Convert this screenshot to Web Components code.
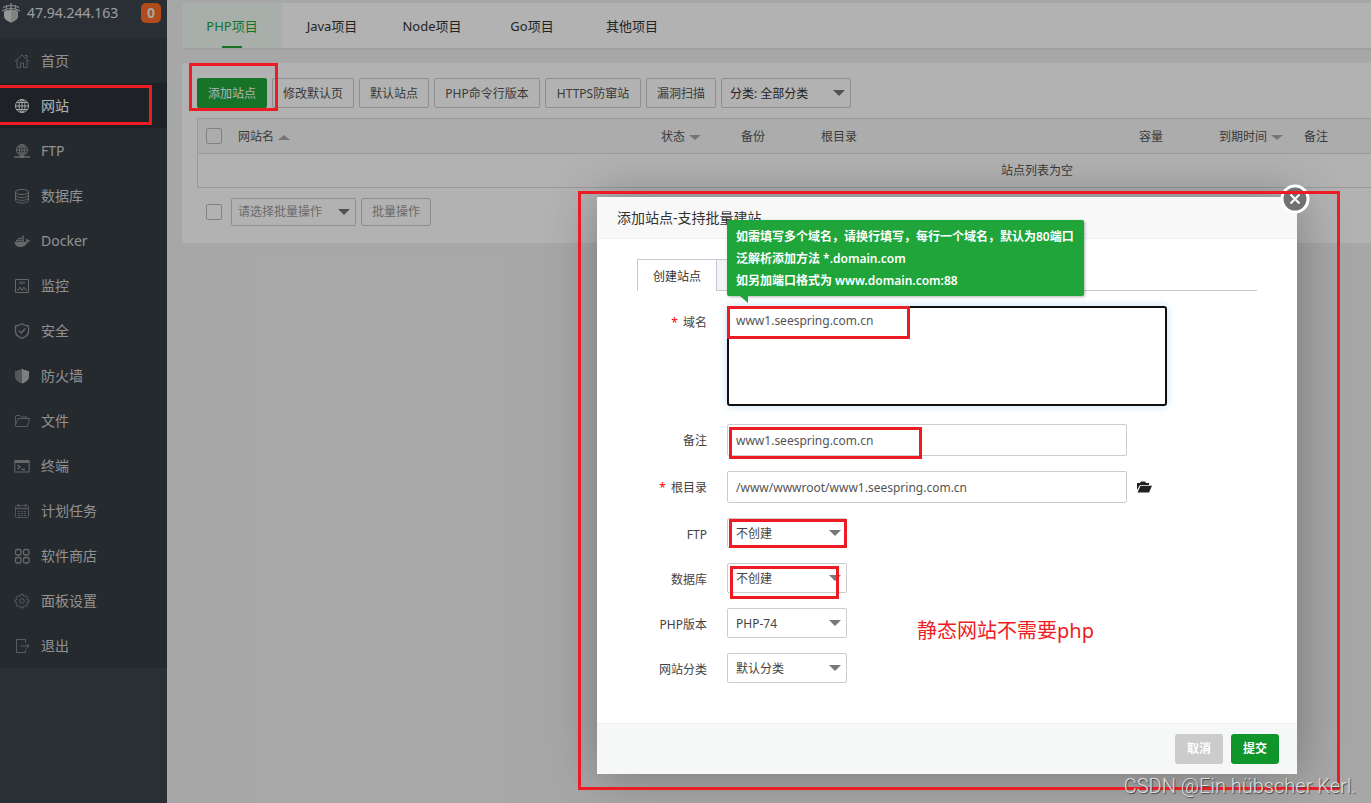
<!DOCTYPE html>
<html lang="zh-CN">
<head>
<meta charset="utf-8">
<title>网站管理</title>
<style>
  html, body { margin: 0; height: 100%; }
  body {
    font: 12px/20px "Noto Sans", "Noto Sans CJK SC", sans-serif;
    color: #555;
    background: #f0f0f0;
    overflow: hidden;
  }
</style>
</head>
<body>
<panel-app></panel-app>
<script>
const define = (name, html) => customElements.define(name, class extends HTMLElement {
  constructor() {
    super();
    this.attachShadow({ mode: 'open' }).innerHTML = html;
  }
});

const ICONS = {
  home: '<path d="M1 8.500 8 2l7 6.500M3 7v7.500h3.500V10h3v4.500H13V7M11 2.500h2V5" opacity=".8"/>',
  globe: '<circle cx="8" cy="8" r="6.500"/><ellipse cx="8" cy="8" rx="3" ry="6.500"/><path d="M8 1.500v13M1.500 8h13M2.500 4.500h11M2.500 11.500h11"/>',
  ftp: '<circle cx="8" cy="7" r="5.500"/><ellipse cx="8" cy="7" rx="2.500" ry="5.500"/><path d="M8 1.500v11M2.500 7h11M3.500 4h9M3.500 10h9"/><path d="M0 14h16" stroke-width="1.500"/><path d="M6 13h4v2H6z" fill="currentColor" stroke="none"/>',
  db: '<ellipse cx="8" cy="4" rx="6.500" ry="2.500"/><path d="M1.500 4v8.500c0 1.400 3 2.500 6.500 2.500s6.500-1.100 6.500-2.500V4M1.500 7c0 1.400 3 2.500 6.500 2.500S14.500 8.400 14.500 7M1.500 9.800c0 1.400 3 2.500 6.500 2.500s6.500-1.100 6.500-2.500"/>',
  docker: '<g fill="currentColor" stroke="none"><path d="M.5 9h11.300c.4-.9.300-1.800-.1-2.600l1-.8c.6.5.900 1.100 1 1.700.8-.1 1.500 0 2.300.4-.4 1-1.200 1.600-2.500 1.600C12.300 12.500 10 14 6.500 14 3 14 .8 12.500.5 9z"/><path d="M2 6.700h1.700v1.700H2zM4.100 6.700h1.700v1.700H4.100zM6.200 6.700h1.700v1.700H6.200zM8.300 6.700H10v1.700H8.300zM4.100 4.800h1.700v1.500H4.100zM6.200 4.800h1.700v1.500H6.200zM8.300 4.800H10v1.500H8.300zM8.300 2.800H10v1.500H8.300z"/></g>',
  monitor: '<path d="M1.500 1.500h13v13h-13z"/><path d="M3 12h1.500l1.500-3 2 3.500 2-3.500 1.500 3H13"/><path d="M5 3.500h6v2.500H5z" fill="currentColor" stroke="none" opacity=".5"/>',
  shield: '<path d="M8 .8c2 1.400 4 2 6.500 2.200v5.200c0 3.300-2.500 5.700-6.500 7.200-4-1.500-6.500-3.900-6.500-7.200V3C4 2.800 6 2.200 8 .8z" stroke-width="1.300"/><path d="m4.800 7.500 2.500 2.500 4-4.500" stroke-width="1.300"/>',
  wall: '<path d="M8 .5 6 2H4L3 3H1v5.500c0 3 2.500 5.500 7 7z" fill="currentColor" stroke="none" opacity=".75"/><path d="M8 .5 10 2h2l1 1h2v5.500c0 3-2.500 5.500-7 7z" fill="#b4b6b8" stroke="none"/>',
  folder: '<path d="M1.500 12.500v-9q0-1 1-1h3.500L7.500 4H13v1.500M1.500 12.500 4 5.500h11.500l-2 8h-11q-1 0-1-1z" opacity=".8"/>',
  terminal: '<path d="M.8 2.500h14.400v11.500H.8z"/><path d="M1 2h14v3H1z" fill="currentColor" stroke="none"/><path d="m3.500 7 2.500 2-2.500 2M7.500 11.500H11" stroke-width="1.300"/>',
  calendar: '<g opacity=".7"><rect x="1.500" y="2.500" width="13" height="12" rx="1"/><path d="M1.500 5.500h13M4.500 1v3M11.500 1v3" stroke-width="1.500"/><path d="M4 8.500h8M4 10.500h8M4 12.500h8" stroke-dasharray="2 1"/></g>',
  apps: '<g stroke-width="1.300"><rect x="1.500" y="1.500" width="5.500" height="5.500" rx="1.500"/><rect x="9.500" y="1.500" width="5.500" height="5.500" rx="1.500"/><rect x="1.500" y="9.500" width="5.500" height="5.500" rx="1.500"/><rect x="9.500" y="9.500" width="5.500" height="5.500" rx="1.500"/></g>',
  gear: '<g opacity=".8"><circle cx="8" cy="8" r="2.300"/><path d="M6.800 1.300h2.400l.4 1.900 1 .4 1.600-1.100 1.500 1.600-1 1.600.4 1 1.900.3v2.200l-1.900.4-.4 1 1.100 1.600-1.600 1.600-1.600-1.100-1 .4-.4 1.800H6.800l-.4-1.800-1-.4-1.600 1.100-1.600-1.600 1.100-1.600-.4-1L1 9.200V7l1.900-.3.4-1-1-1.600 1.500-1.600 1.600 1.100 1-.4z"/></g>',
  exit: '<path d="M11.500 4.500v-3h-9v13h9v-3M6.500 8H15M12.500 5.500 15 8l-2.500 2.500" opacity=".8"/>'
};

customElements.define('nav-item', class extends HTMLElement {
  connectedCallback() {
    const root = this.shadowRoot || this.attachShadow({ mode: 'open' });
    root.innerHTML = `
      <style>
        :host { display: block; }
        a { display: flex; align-items: center; gap: 11px; height: 45px; padding-left: 14px;
            font-size: 14px; color: #d0d0d0; text-decoration: none; }
        svg { width: 16px; height: 16px; color: #929598; fill: none; stroke: currentColor; stroke-width: 1; }
        :host([current]) a { background: #2c3138; color: #fff; }
        :host([current]) svg { color: #eee; }
      </style>
      <a href="#"><svg viewBox="0 0 16 16" aria-hidden="true">${ICONS[this.getAttribute('icon')]}</svg><slot></slot></a>`;
  }
});

define('side-bar', `
  <style>
    :host { display: block; background: #3c444d; }
    header { display: flex; align-items: center; height: 38px; box-sizing: border-box; padding: 0 6px 12px 2px; color: #e0e0e0; }
    .logo { width: 18px; height: 20px; margin-right: 7px; flex: none; }
    .ip { font-size: 14px; flex: 1; }
    .badge { width: 20px; height: 20px; border-radius: 5px; background: #fc6d26; color: #ececec;
             text-align: center; font-size: 14px; font-weight: 700; }
    nav { background: #353d44; }
  </style>
  <header>
    <svg class="logo" viewBox="0 0 18 20" aria-hidden="true">
      <path d="M1 4.500Q9 .5 17 4.500M0 8q9-5 18 0M9 0v5M4.500 2v4M13.500 2v4" fill="none" stroke="#c8c8c8" stroke-width="1.200"/>
      <path d="M2 8.500 4.500 7l2 .5L9 6l2.500 1.500 2-.5L16 8.500V13c0 3-3 5-7 6.500C5 18 2 16 2 13z" fill="#d8d8d8"/>
      <path d="M9 6v13.500c4-1.500 7-3.500 7-6.500V8.500L13.500 7l-2 .5z" fill="#bcbcbc"/>
    </svg>
    <span class="ip">47.94.244.163</span><span class="badge">0</span>
  </header>
  <nav>
    <nav-item icon="home">首页</nav-item>
    <nav-item icon="globe" current>网站</nav-item>
    <nav-item icon="ftp">FTP</nav-item>
    <nav-item icon="db">数据库</nav-item>
    <nav-item icon="docker">Docker</nav-item>
    <nav-item icon="monitor">监控</nav-item>
    <nav-item icon="shield">安全</nav-item>
    <nav-item icon="wall">防火墙</nav-item>
    <nav-item icon="folder">文件</nav-item>
    <nav-item icon="terminal">终端</nav-item>
    <nav-item icon="calendar">计划任务</nav-item>
    <nav-item icon="apps">软件商店</nav-item>
    <nav-item icon="gear">面板设置</nav-item>
    <nav-item icon="exit">退出</nav-item>
  </nav>`);

define('project-tabs', `
  <style>
    :host { display: flex; height: 45px; background: #fff; border-radius: 4px 0 0 4px; box-shadow: 0 2px 2px rgba(0,0,0,.06); }
    button { position: relative; width: 100px; border: 0; padding: 0; background: none; font: inherit; font-size: 13px; color: #333; }
    .on { color: #20a53a; background: #f1f9f3; }
    .on::after { content: ""; position: absolute; left: 40px; bottom: 0; width: 20px; height: 2px; background: #20a53a; }
  </style>
  <button class="on">PHP项目</button><button>Java项目</button><button>Node项目</button><button>Go项目</button><button>其他项目</button>`);

define('drop-down', `
  <style>
    :host { display: inline-block; position: relative; }
    :host::after { content: ""; position: absolute; right: 6px; top: 50%; margin-top: -3px; pointer-events: none;
      border: 6px solid transparent; border-top-color: #777; border-bottom: 0; }
  </style>
  <slot></slot>`);

define('site-panel', `
  <style>
    :host { display: block; background: #fff; border-radius: 4px 0 0 4px; padding: 15px 0 17px 15px; overflow: hidden; }
    .bar { display: flex; align-items: center; gap: 5px; }
    button, select { box-sizing: border-box; height: 30px; border: 1px solid #ccc; border-radius: 2px; background: #fff;
      font: inherit; color: #555; padding: 2px 0 0; }
    button { white-space: nowrap; width: 70px; }
    .w82 { width: 82px; }
    .w96 { width: 96px; }
    .w106 { width: 106px; }
    select { display: block; appearance: none; width: 130px; padding: 2px 8px 0; color: #333; }
    .primary { background: #20a53a; border-color: #20a53a; color: #fff; }
    input { display: block; appearance: none; box-sizing: border-box; width: 16px; height: 16px; margin: 0; border: 1px solid #bbb; border-radius: 2px; }
    .batch select, .batch button { height: 28px; color: #999; }
    .batch select { width: 125px; padding: 0 6px; }
    .batch button { padding: 0; }
    .batch { padding-left: 9px; }
    .batch input { margin-right: 4px; }
    table { width: 100%; min-width: 1680px; margin: 10px 0; table-layout: fixed; border-collapse: separate; border-spacing: 0; box-sizing: border-box; border: 1px solid #ddd; border-bottom: 0; }
    th, td { box-sizing: border-box; height: 35px; padding: 0 8px; border-bottom: 1px solid #ddd; font-weight: 400; text-align: left; color: #555; }
    td { height: 34px; text-align: center; }
    th { background: #f6f6f6; padding-top: 2px; }
    .check { padding-top: 0; }
    i { display: inline-block; margin-left: 4px; border: 6px solid transparent; border-top: 5px solid #aaa; border-bottom: 0; vertical-align: middle; }
    .up { border: 6px solid transparent; border-bottom: 5px solid #aaa; border-top: 0; }
  </style>
  <div class="bar">
    <button class="primary">添加站点</button><button class="w82">修改默认页</button><button>默认站点</button><button class="w106">PHP命令行版本</button><button class="w96">HTTPS防窜站</button><button>漏洞扫描</button>
    <drop-down><select aria-label="分类"><option>分类: 全部分类</option></select></drop-down>
  </div>
  <table>
    <colgroup><col style="width:32px"><col style="width:423px"><col style="width:80px"><col style="width:80px"><col style="width:318px"><col style="width:80px"><col style="width:85px"><col></colgroup>
    <thead><tr><th class="check"><input type="checkbox" aria-label="全选"></th><th>网站名<i class="up"></i></th><th>状态<i></i></th><th>备份</th><th>根目录</th><th>容量</th><th>到期时间<i></i></th><th>备注</th></tr></thead>
    <tbody><tr><td colspan="8">站点列表为空</td></tr></tbody>
  </table>
  <div class="bar batch">
    <input type="checkbox" aria-label="批量选择">
    <drop-down><select aria-label="批量操作类型"><option>请选择批量操作</option></select></drop-down>
    <button>批量操作</button>
  </div>`);

define('form-row', `
  <style>
    :host { display: flex; margin-bottom: 15px; }
    .label { flex: none; width: 110px; margin-right: 20px; text-align: right; line-height: 34px; }
    .star { color: #f00; margin-right: 5px; display: none; }
    :host([required]) .star { display: inline; }
    .field { display: flex; align-items: center; gap: 9px; min-width: 0; }
  </style>
  <div class="label"><span class="star">*</span><slot name="label"></slot></div>
  <div class="field"><slot></slot></div>`);

define('mark-box', `
  <style>
    :host { display: block; position: absolute; box-sizing: border-box; border: 3px solid #ed1c24; pointer-events: none; z-index: 5; }
  </style>`);

define('help-tip', `
  <style>
    :host { display: block; position: absolute; box-sizing: border-box; padding: 6px 10px 4px 9px; background: #20a53a; color: #fff;
      border-radius: 2px; line-height: 22px; font-weight: 600; white-space: nowrap; box-shadow: 1px 1px 3px rgba(0,0,0,.3); z-index: 3; }
    :host::after { content: ""; position: absolute; left: 13px; top: 100%; width: 8px; height: 7px; background: #20a53a; clip-path: polygon(0 0, 100% 0, 100% 100%); }
  </style>
  <slot></slot>`);

define('site-dialog', `
  <style>
    :host { display: block; position: relative; width: 700px; background: #fff; border-radius: 2px; color: #444; box-shadow: 1px 1px 50px rgba(0,0,0,.3); }
    h2 { margin: 0; height: 41px; line-height: 42px; padding: 0 20px; font-size: 14px; font-weight: 400; color: #333; background: #f8f8f8; border-bottom: 1px solid #eee; border-radius: 2px 2px 0 0; }
    .close { position: absolute; right: -13px; top: -13px; width: 30px; height: 30px; padding: 0; border: 0; background: none; z-index: 4; }
    .close svg { display: block; }
    .tabs { display: flex; height: 32px; margin: 20px 40px 15px; box-shadow: inset 0 -1px #c8c8d4; }
    .tabs button { box-sizing: border-box; width: 80px; border: 1px solid #c8c8d4; border-width: 1px 1px 0; background: #fff; padding: 2px 0 0; font: inherit; color: #333; }
    .tabs button + button { border-left: 0; border-bottom-width: 1px; background: #f3f3f5; }
    input, select, textarea { box-sizing: border-box; border: 1px solid #ccc; border-radius: 2px; background: #fff; font: inherit; color: #555; }
    input { width: 400px; height: 32px; padding: 0 8px; }
    select { display: block; appearance: none; width: 120px; height: 30px; padding: 2px 8px 0; color: #444; }
    textarea { display: block; width: 440px; height: 100px; padding: 3px 7px; border: 2px solid #101010; border-radius: 3px; resize: none; outline: 0; box-shadow: 0 0 8px rgba(102,175,233,.4); }
    form-row.pick-row { height: 32px; }
    form-row.short { height: 30px; }
    .wide { margin-bottom: 18px; }
    .pick { width: 16px; height: 16px; padding: 0; border: 0; background: none; }
    .pick svg { display: block; }
    .space { height: 25px; }
    footer { display: flex; justify-content: flex-end; gap: 8px; padding: 10px 18px; background: #f6f8f8; border-top: 1px solid #edf1f2; }
    footer button { width: 48px; height: 30px; padding: 0; border: 0; border-radius: 3px; font: inherit; font-weight: 700; color: #fff; background: #ccc; }
    footer .ok { background: #10952a; }
    help-tip { left: 130px; top: 23px; }
    .note { position: absolute; left: 320px; top: 420px; margin: 0; font-size: 20px; line-height: 28px; color: #ed1c24; white-space: nowrap; }
    .m-all { left: -19px; top: -6px; right: -43px; bottom: -16px; }
    .m-domain { left: 130px; top: 109px; width: 183px; height: 33px; }
    .m-remark { left: 132px; top: 230px; width: 193px; height: 32px; }
    .m-ftp { left: 132px; top: 322px; width: 118px; height: 29px; }
    .m-db { left: 133px; top: 369px; width: 109px; height: 33px; }
  </style>
  <h2>添加站点-支持批量建站</h2>
  <button class="close" aria-label="关闭"><svg width="30" height="30" viewBox="0 0 30 30"><circle cx="15" cy="15" r="13" fill="#717171" stroke="#fff" stroke-width="3"/><path d="m10.500 10.500 9 9m0-9-9 9" stroke="#fff" stroke-width="2" fill="none"/></svg></button>
  <div class="tabs"><button>创建站点</button><button aria-label="批量创建"></button></div>
  <form-row required class="wide"><label slot="label" for="domain">域名</label><textarea id="domain">www1.seespring.com.cn</textarea></form-row>
  <form-row class="pick-row"><label slot="label" for="remark">备注</label><input id="remark" value="www1.seespring.com.cn"></form-row>
  <form-row required class="pick-row"><label slot="label" for="root">根目录</label><input id="root" value="/www/wwwroot/www1.seespring.com.cn"><button class="pick" aria-label="选择目录"><svg width="16" height="16" viewBox="0 0 16 16"><path d="M1 11V4h3l1-1.500h4L10 4h3v2H4z" fill="#222"/><path d="M4.500 6.800H16L13 13.500H1.500z" fill="#222"/></svg></button></form-row>
  <form-row class="short"><label slot="label" for="ftp">FTP</label><drop-down><select id="ftp"><option>不创建</option></select></drop-down></form-row>
  <form-row class="short"><label slot="label" for="db">数据库</label><drop-down><select id="db"><option>不创建</option></select></drop-down></form-row>
  <form-row class="short"><label slot="label" for="php">PHP版本</label><drop-down><select id="php"><option>PHP-74</option></select></drop-down></form-row>
  <form-row class="short"><label slot="label" for="type">网站分类</label><drop-down><select id="type"><option>默认分类</option></select></drop-down></form-row>
  <div class="space"></div>
  <footer><button>取消</button><button class="ok">提交</button></footer>
  <help-tip>如需填写多个域名，请换行填写，每行一个域名，默认为80端口<br>泛解析添加方法 *.domain.com<br>如另加端口格式为 www.domain.com:88</help-tip>
  <p class="note">静态网站不需要php</p>
  <mark-box class="m-all"></mark-box><mark-box class="m-domain"></mark-box><mark-box class="m-remark"></mark-box><mark-box class="m-ftp"></mark-box><mark-box class="m-db"></mark-box>`);

define('panel-app', `
  <style>
    :host { display: grid; grid-template-columns: 167px minmax(0, 1fr); min-height: 100vh; position: relative; overflow: hidden; }
    main { padding: 3px 0 0 15px; }
    project-tabs { margin-bottom: 15px; }
    .shade { position: absolute; inset: 0; box-sizing: border-box; display: flex; justify-content: flex-end; align-items: flex-start; padding: 197px 74px 0 0; background: rgba(0,0,0,.3); }
    site-dialog { flex: none; }
    .m-nav { left: -3px; top: 85px; width: 155px; height: 40px; }
    .m-add { left: 189px; top: 63px; width: 89px; height: 48px; }
    .sign { position: absolute; right: 15px; bottom: 4px; font: 20px/26px Roboto, sans-serif; font-weight: 300; color: #ddd; text-shadow: 1px 1px 1px #444; z-index: 6; }
  </style>
  <side-bar></side-bar>
  <main><project-tabs></project-tabs><site-panel></site-panel></main>
  <div class="shade"><site-dialog></site-dialog></div>
  <mark-box class="m-nav"></mark-box><mark-box class="m-add"></mark-box>
  <span class="sign">CSDN @Ein hübscher Kerl.</span>`);
</script>
</body>
</html>
